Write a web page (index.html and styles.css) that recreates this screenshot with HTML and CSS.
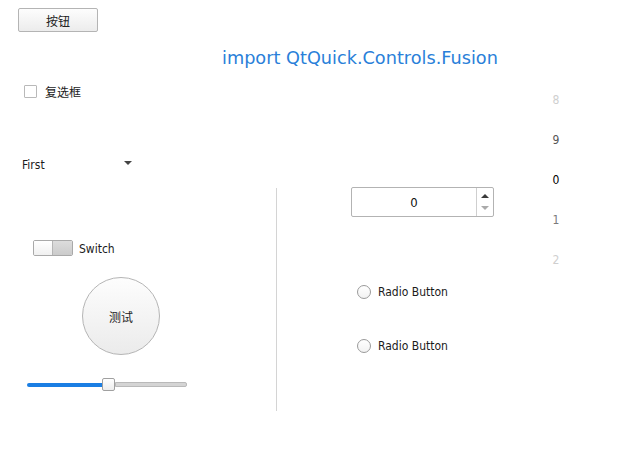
FILE: index.html
```html
<!DOCTYPE html>
<html>
<head>
<meta charset="utf-8">
<link rel="stylesheet" href="styles.css">
</head>
<body>
<div class="page">
  <div class="main">
    <div class="btn-row"><button class="btn">按钮</button></div>
    <div class="title">import QtQuick.Controls.Fusion</div>
    <label class="check-row"><span class="checkbox"></span><span class="cjk">复选框</span></label>
    <div class="combo"><span>First</span><span class="combo-arrow"></span></div>
    <div class="lower">
      <div class="left-pane">
        <div class="switch-row">
          <span class="switch"><span class="switch-handle"></span><span class="switch-track"></span></span>
          <span class="switch-label">Switch</span>
        </div>
        <div class="round-row"><div class="round-btn cjk">测试</div></div>
        <div class="slider">
          <div class="slider-fill"></div>
          <div class="slider-handle"></div>
          <div class="slider-rest"></div>
        </div>
      </div>
      <div class="separator"></div>
      <div class="right-pane">
        <div class="spinbox">
          <div class="spin-value">0</div>
          <div class="spin-buttons">
            <span class="arrow-up"></span>
            <span class="arrow-down"></span>
          </div>
        </div>
        <div class="radio-row first"><span class="radio"></span><span>Radio Button</span></div>
        <div class="radio-row second"><span class="radio"></span><span>Radio Button</span></div>
      </div>
    </div>
  </div>
  <div class="tumbler">
    <div class="t-item faint">8</div>
    <div class="t-item mid">9</div>
    <div class="t-item cur">0</div>
    <div class="t-item mid2">1</div>
    <div class="t-item faint">2</div>
  </div>
</div>
</body>
</html>
```

FILE: styles.css
```css
html, body {
  margin: 0;
  padding: 0;
  background: #ffffff;
}
body {
  font-family: "DejaVu Sans Condensed", "DejaVu Sans", "Noto Sans CJK SC", sans-serif;
  font-size: 12px;
  color: #1b1b1b;
}
.cjk {
  font-family: "Noto Sans CJK SC", sans-serif;
}
.page {
  display: grid;
  grid-template-columns: 530px 1fr;
  width: 621px;
  height: 462px;
}
.main {
  display: flex;
  flex-direction: column;
}
.btn-row {
  padding: 8px 0 0 18px;
  height: 24px;
}
.btn {
  box-sizing: border-box;
  width: 80px;
  height: 24px;
  border: 1px solid #b4b4b4;
  border-radius: 2px;
  background: linear-gradient(#fdfdfd, #ececec);
  font-family: "Noto Sans CJK SC", sans-serif;
  font-size: 12px;
  color: #222;
  padding: 0;
  margin: 0;
}
.title {
  margin: 14px 0 0 222px;
  height: 24px;
  line-height: 24px;
  font-family: "DejaVu Sans", sans-serif;
  font-size: 17.7px;
  color: #2a7fd9;
  white-space: nowrap;
}
.check-row {
  display: flex;
  align-items: center;
  gap: 8px;
  margin: 15px 0 0 24px;
  height: 13px;
}
.checkbox {
  box-sizing: border-box;
  width: 13px;
  height: 13px;
  border: 1px solid #b9b9b9;
  border-radius: 1px;
  background: #fff;
}
.combo {
  display: flex;
  align-items: center;
  justify-content: space-between;
  width: 110px;
  height: 24px;
  margin: 55px 0 0 22px;
}
.combo-arrow {
  width: 0;
  height: 0;
  border-left: 4px solid transparent;
  border-right: 4px solid transparent;
  border-top: 4px solid #444;
  margin-top: -5px;
}
.lower {
  display: grid;
  grid-template-columns: 276px 1px 1fr;
  margin-top: 11px;
  height: 223px;
}
.left-pane {
  display: flex;
  flex-direction: column;
}
.switch-row {
  display: flex;
  align-items: center;
  gap: 6px;
  margin: 52px 0 0 33px;
  height: 16px;
}
.switch-label {
  margin-top: 2px;
}
.switch {
  box-sizing: border-box;
  display: flex;
  width: 40px;
  height: 16px;
  border: 1px solid #a9a9a9;
  border-radius: 2px;
  overflow: hidden;
}
.switch-handle {
  width: 18px;
  background: linear-gradient(#ffffff, #f0f0f0);
  border-right: 1px solid #b5b5b5;
}
.switch-track {
  flex: 1;
  background: linear-gradient(#dcdcdc, #cbcbcb);
}
.round-row {
  margin: 21px 0 0 82px;
}
.round-btn {
  box-sizing: border-box;
  width: 78px;
  height: 78px;
  border-radius: 50%;
  border: 1px solid #b5b5b5;
  background: linear-gradient(#fdfdfd, #ebebeb);
  display: flex;
  align-items: center;
  justify-content: center;
  font-size: 12px;
  color: #222;
}
.slider {
  display: flex;
  align-items: center;
  margin: 23px 0 0 27px;
  width: 160px;
  height: 13px;
}
.slider-fill {
  width: 75px;
  height: 4px;
  background: #1a7ee3;
  border-radius: 2px 0 0 2px;
}
.slider-handle {
  box-sizing: border-box;
  width: 13px;
  height: 13px;
  border: 1px solid #a0a0a0;
  border-radius: 2px;
  background: linear-gradient(#ffffff, #ededed);
}
.slider-rest {
  box-sizing: border-box;
  flex: 1;
  height: 5px;
  border: 1px solid #b9b9b9;
  background: #d4d4d4;
  border-radius: 0 2px 2px 0;
}
.separator {
  background: #d4d4d4;
}
.right-pane {
  display: flex;
  flex-direction: column;
}
.spinbox {
  box-sizing: border-box;
  display: flex;
  width: 143px;
  height: 30px;
  margin: -1px 0 0 74px;
  border: 1px solid #b3b3b3;
  border-radius: 2px;
  background: #fff;
}
.spin-value {
  flex: 1;
  display: flex;
  align-items: center;
  justify-content: center;
  font-size: 13px;
  color: #111;
  padding-top: 1px;
}
.spin-buttons {
  width: 16px;
  border-left: 1px solid #cfcfcf;
  display: flex;
  flex-direction: column;
  align-items: center;
  justify-content: center;
  gap: 8px;
}
.arrow-up {
  width: 0;
  height: 0;
  border-left: 4px solid transparent;
  border-right: 4px solid transparent;
  border-bottom: 4px solid #3a3a3a;
}
.arrow-down {
  width: 0;
  height: 0;
  border-left: 4px solid transparent;
  border-right: 4px solid transparent;
  border-top: 4px solid #aaaaaa;
}
.radio-row {
  display: flex;
  align-items: center;
  gap: 7px;
  height: 13px;
  margin-left: 80px;
}
.radio-row.first {
  margin-top: 68px;
}
.radio-row.second {
  margin-top: 41px;
}
.radio {
  box-sizing: border-box;
  width: 14px;
  height: 14px;
  border-radius: 50%;
  border: 1px solid #9a9a9a;
  background: linear-gradient(#ffffff, #f2f2f2);
}
.tumbler {
  padding-top: 80px;
  width: 52px;
}
.t-item {
  height: 40px;
  display: flex;
  align-items: center;
  justify-content: center;
  font-size: 12px;
}
.t-item.faint { color: #cfcfcf; }
.t-item.mid { color: #555555; }
.t-item.cur { color: #000000; }
.t-item.mid2 { color: #7a7a7a; }
```
